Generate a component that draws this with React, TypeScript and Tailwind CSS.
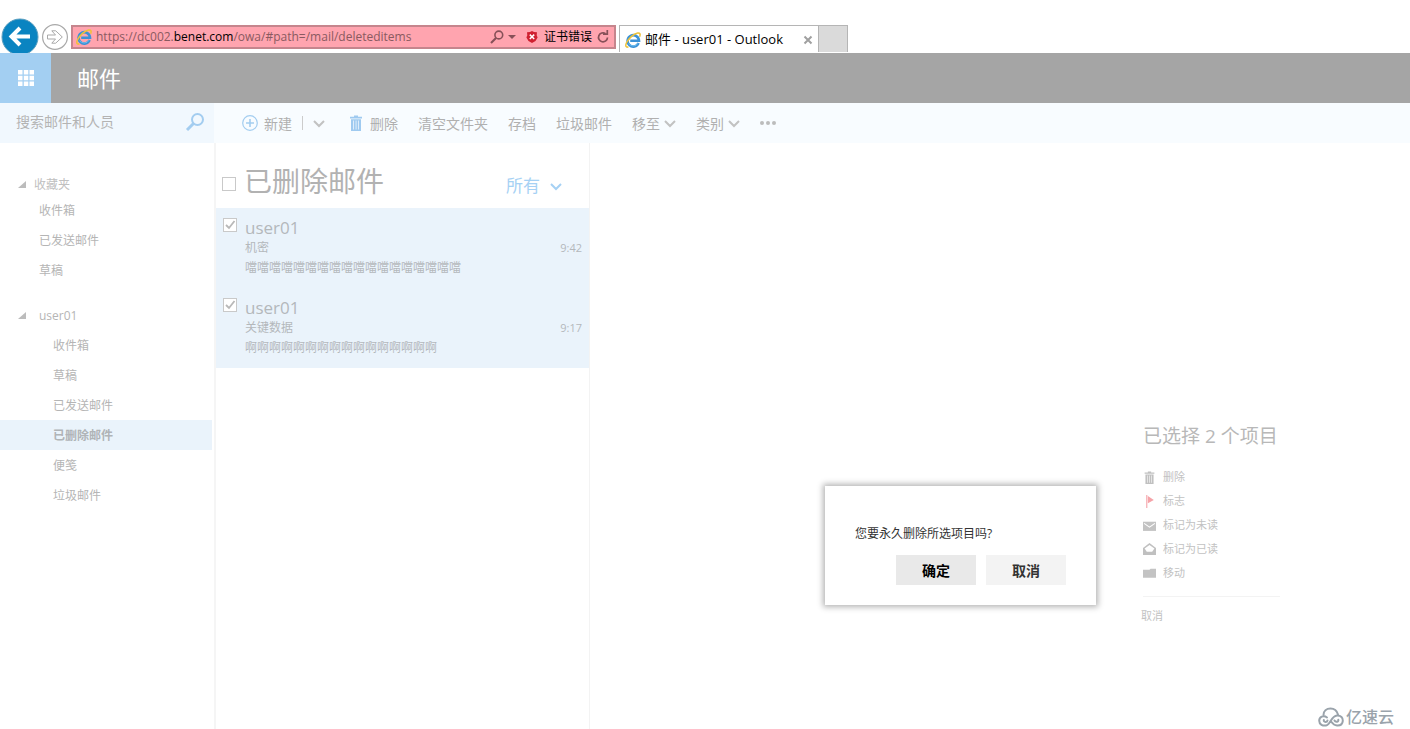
import React from "react";

const folders = ["收件箱", "草稿", "已发送邮件", "已删除邮件", "便笺", "垃圾邮件"];
const favorites = ["收件箱", "已发送邮件", "草稿"];

const mails = [
  { from: "user01", subject: "机密", time: "9:42", preview: "噹噹噹噹噹噹噹噹噹噹噹噹噹噹噹噹噹噹" },
  { from: "user01", subject: "关键数据", time: "9:17", preview: "啊啊啊啊啊啊啊啊啊啊啊啊啊啊啊啊" },
];

const IeLogo = () => (
  <svg className="h-4 w-4 shrink-0" viewBox="0 0 16 16" fill="none">
    <path d="M13.600 11A5.700 5.700 0 1 1 14 8.700H5.200" stroke="#3c92d6" strokeWidth="2.600" />
    <path d="M13 11.200A5.400 5.400 0 0 1 3.600 11.400" stroke="#74c6f5" strokeWidth="0.800" />
    <path
      d="M3.400 14.800C1.200 15.800 0 14.200 1.400 11C3.400 6.600 8.600 1.800 12.600 1C15.200 .6 15.600 2.400 14.600 4.800"
      stroke="#efc238"
      strokeWidth="1.500"
    />
  </svg>
);

const Chevron = ({ className = "text-[#c2c2c2]" }: { className?: string }) => (
  <svg className={`h-3 w-3 shrink-0 ${className}`} viewBox="0 0 12 12" fill="none" stroke="currentColor" strokeWidth="2">
    <path d="M1 4l5 5 5-5" />
  </svg>
);

const TrashIcon = ({ className }: { className: string }) => (
  <svg className={`shrink-0 ${className}`} viewBox="0 0 14 16" fill="currentColor">
    <path d="M1 1.800h4V.600h4v1.200h4v1.600H1z" />
    <path fillRule="evenodd" d="M2 4.200h10V16H2zM4.200 5.600v9h.7v-9zM6.700 5.600v9h.7v-9zM9.200 5.600v9h.7v-9z" />
  </svg>
);

const Triangle = () => (
  <svg className="h-2 w-2 shrink-0" viewBox="0 0 8 8" fill="#bcbcbc">
    <path d="M8 0v7H0z" />
  </svg>
);

const CheckBox = ({ label, checked = false }: { label: string; checked?: boolean }) => (
  <span className="grid h-[14px] w-[14px] shrink-0">
    <input
      type="checkbox"
      aria-label={label}
      defaultChecked={checked}
      className="peer col-start-1 row-start-1 h-[14px] w-[14px] appearance-none border border-[#c9c9c9] bg-white"
    />
    <svg
      className="pointer-events-none invisible col-start-1 row-start-1 h-[14px] w-[14px] peer-checked:visible"
      viewBox="0 0 14 14"
      fill="none"
      stroke="#b8b8b8"
      strokeWidth="1.8"
    >
      <path d="M3 7l3 3 5.500-7" />
    </svg>
  </span>
);

const BrowserBar = () => (
  <div className="flex h-[53px] items-end overflow-hidden bg-white pl-px">
    <button type="button" aria-label="后退" className="-mb-[3px] h-[38px] w-[38px] shrink-0">
      <svg viewBox="0 0 38 38" className="h-full w-full" fill="none">
        <circle cx="19" cy="19" r="18" fill="#0a84c1" stroke="#5b9fc0" />
        <path d="M29 18.500H11M19 10L10.500 18.500l8.500 8.500" stroke="#fff" strokeWidth="4" />
      </svg>
    </button>
    <button type="button" aria-label="前进" className="mb-[3px] ml-[3px] h-[26px] w-[26px] shrink-0">
      <svg viewBox="0 0 26 26" className="h-full w-full" fill="none" stroke="#a9a9a9" strokeLinejoin="round">
        <circle cx="13" cy="13" r="12.400" strokeWidth="1.200" />
        <path d="M5.500 11h8L9.800 6.800h3.900L20.300 13L13.700 19.200H9.800L13.500 15h-8z" />
      </svg>
    </button>
    <div className="mb-1 ml-[3px] flex h-6 w-[545px] items-center border-2 border-[#c5858d] bg-[#ffa4af] pl-[3px] pr-1 text-[12px] text-black">
      <IeLogo />
      <span className="ml-1 flex-1 whitespace-nowrap text-[#8a5a60]">
        https://dc002.<span className="text-black">benet.com</span>/owa/#path=/mail/deleteditems
      </span>
      <button type="button" aria-label="搜索" className="flex items-center gap-1 text-[#875058]">
        <svg className="h-[14px] w-[14px]" viewBox="0 0 14 14" fill="none" stroke="currentColor">
          <circle cx="8.800" cy="5" r="3.900" strokeWidth="1.600" />
          <path d="M6 8L1 13" strokeWidth="2.200" />
        </svg>
        <svg className="h-2 w-2" viewBox="0 0 8 8" fill="currentColor">
          <path d="M0 2h8L4 6z" />
        </svg>
      </button>
      <button type="button" className="ml-[10px] flex items-center gap-[6px]">
        <svg className="h-3 w-3" viewBox="0 0 12 12">
          <path d="M6 0l2 1 3 .2-.3 3 .9 2.200L9.500 10 6 12 2.500 10 .4 6.400l.9-2.200-.3-3L4 1z" fill="#cf2030" />
          <path d="M3.800 3.600l4.400 4.400M8.200 3.600L3.800 8" stroke="#fff" strokeWidth="1.500" />
        </svg>
        证书错误
      </button>
      <button type="button" aria-label="刷新" className="ml-1 text-[#875058]">
        <svg className="h-[14px] w-[14px]" viewBox="0 0 14 14" fill="none" stroke="currentColor" strokeWidth="1.700">
          <path d="M11.500 7.500A4.500 4.500 0 1 1 9.500 3.600" />
          <path d="M7 4.200h4.300V0" />
        </svg>
      </button>
    </div>
    <div className="mb-px ml-[3px] flex h-[27px] w-[200px] items-center border border-b-0 border-[#b5b5b5] bg-white px-[5px] pt-px text-[13px] text-black">
      <IeLogo />
      <span className="ml-1 flex-1 whitespace-nowrap">邮件 - user01 - Outlook</span>
      <button type="button" aria-label="关闭" className="text-[#a0a0a0]">
        <svg className="h-[10px] w-[10px]" viewBox="0 0 10 10" stroke="currentColor" strokeWidth="2">
          <path d="M1.500 1.500l7 7M8.500 1.500l-7 7" />
        </svg>
      </button>
    </div>
    <button
      type="button"
      aria-label="新选项卡"
      className="mb-px h-[27px] w-[29px] border border-b-0 border-l-0 border-[#b5b5b5] bg-[#dadada]"
    />
  </div>
);

const Toolbar = () => (
  <div className="flex h-10">
    <div className="flex w-[214px] shrink-0 items-center bg-[#f1f8fe] pb-[3px] pl-4 pr-[9px]">
      <input
        type="text"
        aria-label="搜索"
        placeholder="搜索邮件和人员"
        className="min-w-0 flex-1 bg-transparent text-[14px] outline-none placeholder:text-[#b4b4b4]"
      />
      <button type="button" aria-label="搜索" className="text-[#a3cdf0]">
        <svg className="h-5 w-5" viewBox="0 0 20 20" fill="none" stroke="currentColor">
          <circle cx="12.500" cy="7.500" r="5.500" strokeWidth="2" />
          <path d="M8.500 11.500L2 18" strokeWidth="3" />
        </svg>
      </button>
    </div>
    <div className="flex flex-1 items-center gap-5 bg-[#f8fcff] pl-7 text-[14px] text-[#b0b0b0]">
      <div className="flex items-center">
        <button type="button" className="flex items-center gap-[6px]">
          <svg className="h-4 w-4" viewBox="0 0 16 16" fill="none" stroke="#a3cdf0">
            <circle cx="8" cy="8" r="7.300" strokeWidth="1.200" />
            <path d="M8 4v8M4 8h8" strokeWidth="1.600" />
          </svg>
          新建
        </button>
        <span className="ml-[10px] h-[14px] w-px bg-[#cccccc]" />
        <button type="button" aria-label="更多新建选项" className="ml-[10px]">
          <Chevron />
        </button>
      </div>
      <button type="button" className="flex items-center gap-[7px] pl-1">
        <TrashIcon className="h-4 w-[14px] text-[#9fcaf0]" />
        删除
      </button>
      <button type="button">清空文件夹</button>
      <button type="button">存档</button>
      <button type="button">垃圾邮件</button>
      <button type="button" className="flex items-center gap-1">
        移至
        <Chevron />
      </button>
      <button type="button" className="flex items-center gap-1">
        类别
        <Chevron />
      </button>
      <button type="button" aria-label="更多">
        <svg className="h-1 w-4" viewBox="0 0 16 4" fill="#bcbcbc">
          <circle cx="2" cy="2" r="2" />
          <circle cx="8" cy="2" r="2" />
          <circle cx="14" cy="2" r="2" />
        </svg>
      </button>
    </div>
  </div>
);

const Sidebar = () => (
  <nav className="w-[216px] shrink-0 border-r-2 border-[#f5f5f5] pr-[2px] pt-[30px] text-[12px] text-[#b5b5b5]">
    <button type="button" className="flex h-[22px] items-center gap-2 pl-[18px] pt-[2px] text-[#c0c0c0]">
      <Triangle />
      收藏夹
    </button>
    {favorites.map((name) => (
      <a key={name} href="#" className="flex h-[30px] items-center pl-[39px] pt-[2px]">
        {name}
      </a>
    ))}
    <button type="button" className="mt-[15px] flex h-[30px] items-center gap-[13px] pl-[18px] pt-[2px]">
      <Triangle />
      user01
    </button>
    {folders.map((name) => (
      <a
        key={name}
        href="#"
        className={`flex h-[30px] items-center pl-[53px] pt-[2px] ${
          name === "已删除邮件" ? "bg-[#eaf3fb] font-bold text-[#b0b4b7]" : ""
        }`}
      >
        {name}
      </a>
    ))}
  </nav>
);

const MailList = () => (
  <section className="w-[374px] shrink-0 border-r border-[#f3f3f3]">
    <div className="flex h-[65px] items-center pl-[6px] pr-[27px]">
      <div className="pt-4">
        <CheckBox label="全选" />
      </div>
      <h2 className="ml-2 flex-1 pt-[10px] text-[28px] leading-8 text-[#b2b2b2]">已删除邮件</h2>
      <button type="button" className="flex items-center gap-[10px] pt-5 text-[17px] text-[#a6d1f4]">
        所有
        <Chevron className="text-[#a6d1f4]" />
      </button>
    </div>
    {mails.map((mail) => (
      <article key={mail.subject} className="flex h-20 gap-2 bg-[#eaf3fb] px-[7px] pt-[10px] text-[#b4b8bb]">
        <CheckBox label={mail.subject} checked />
        <div className="min-w-0 flex-1 text-[12px] leading-5">
          <p className="text-[17px]">{mail.from}</p>
          <div className="flex justify-between">
            <span>{mail.subject}</span>
            <span className="text-[11px]">{mail.time}</span>
          </div>
          <p className="truncate">{mail.preview}</p>
        </div>
      </article>
    ))}
  </section>
);

const actions = [
  { label: "删除", icon: <TrashIcon className="h-[13px] w-[13px] text-[#c0c0c0]" /> },
  {
    label: "标志",
    icon: (
      <svg className="h-[13px] w-[13px]" viewBox="0 0 12 12" fill="#f5a3a8">
        <path d="M3 0h1v12H3zM4.500 1L10 4.500L4.500 7.500z" />
      </svg>
    ),
  },
  {
    label: "标记为未读",
    icon: (
      <svg className="h-[13px] w-[13px]" viewBox="0 0 12 12">
        <path d="M0 2.500h12v8.500H0z" fill="#c3c3c3" />
        <path d="M1 4L6 7.500L11 4" fill="none" stroke="#fff" />
      </svg>
    ),
  },
  {
    label: "标记为已读",
    icon: (
      <svg className="h-[13px] w-[13px]" viewBox="0 0 12 12">
        <path d="M0 4.500L6 0l6 4.500V11H0z" fill="#c0c0c0" />
        <path d="M1.500 5L6 1.800L10.500 5L8.500 8h-5z" fill="#fff" />
      </svg>
    ),
  },
  {
    label: "移动",
    icon: (
      <svg className="h-[13px] w-[13px]" viewBox="0 0 12 12" fill="#c3c3c3">
        <path d="M0 2.500h6l1-1h5V10H0z" />
      </svg>
    ),
  },
];

const SelectionPanel = () => (
  <section className="flex flex-1 justify-end pr-[130px] pt-[278px] text-[11px] text-[#c2c2c2]">
    <div className="w-[137px]">
      <h3 className="mb-[14px] whitespace-nowrap text-[19px] leading-[30px] text-[#b8b8b8]">已选择 2 个项目</h3>
      {actions.map((action) => (
        <button key={action.label} type="button" className="flex h-6 items-center gap-[7px]">
          {action.icon}
          {action.label}
        </button>
      ))}
      <hr className="mt-[11px] border-[#f3f3f3]" />
      <button type="button" className="-ml-[2px] mt-[7px] h-6">
        取消
      </button>
    </div>
  </section>
);

const ConfirmDialog = () => (
  <div
    role="dialog"
    aria-label="删除确认"
    className="absolute bottom-[124px] right-[314px] w-[271px] bg-white px-[30px] pb-[20px] pt-[38px] shadow-[0_0_6px_2px_rgba(0,0,0,0.3)]"
  >
    <p className="text-[12px] leading-5 text-[#333333]">您要永久删除所选项目吗?</p>
    <div className="mt-[11px] flex justify-end gap-[10px] text-[14px] font-bold">
      <button type="button" className="h-[30px] w-20 bg-[#e9e9e9] text-black">
        确定
      </button>
      <button type="button" className="h-[30px] w-20 bg-[#f3f3f3] text-[#333333]">
        取消
      </button>
    </div>
  </div>
);

const Watermark = () => (
  <div className="absolute bottom-0 right-4 flex h-6 items-center gap-[2px] text-[16px] font-medium text-[#9aa3ab]">
    <svg className="h-5 w-[26px]" viewBox="0 0 26 20" fill="none" stroke="currentColor" strokeWidth="2" strokeLinecap="round">
      <path d="M5.500 8C5.500 4 8.500 1.500 12.500 1.500S19 4 20 7.500" />
      <path d="M9 10.500C5.500 7.800 1.200 10 1.200 13.800S5 19 8 18.500C12.500 17.800 13 9 19 8.500C23 8.300 25 11 24.800 13.800C24.500 17 22 18.700 19 18.500C16 18.300 14.500 16.500 13 14.500" />
      <path d="M9.500 13.500C9 15.500 5.500 15.500 5.800 13M16.500 13.500C17.500 15.500 20.800 15 20.300 12.800" />
    </svg>
    亿速云
  </div>
);

export default function App() {
  return (
    <div className="relative flex min-h-screen flex-col bg-white font-['Open_Sans','Noto_Sans_CJK_SC',sans-serif]">
      <BrowserBar />
      <header className="flex h-[50px] items-center bg-[#a5a5a5] text-white">
        <button type="button" aria-label="应用启动器" className="flex h-full w-[51px] items-center justify-center bg-[#a3cff2]">
          <svg className="h-4 w-4" viewBox="0 0 16 16" fill="currentColor">
            <path d="M0 0h4.500v4.500H0zM5.800 0h4.500v4.500H5.800zM11.500 0h4.500v4.500h-4.500zM0 5.800h4.500v4.500H0zM5.800 5.800h4.500v4.500H5.800zM11.500 5.800h4.500v4.500h-4.500zM0 11.500h4.500v4.500H0zM5.800 11.500h4.500v4.500H5.800zM11.500 11.500h4.500v4.500h-4.500z" />
          </svg>
        </button>
        <h1 className="ml-[26px] text-[22px]">邮件</h1>
      </header>
      <Toolbar />
      <main className="flex flex-1">
        <Sidebar />
        <MailList />
        <SelectionPanel />
      </main>
      <ConfirmDialog />
      <Watermark />
    </div>
  );
}
